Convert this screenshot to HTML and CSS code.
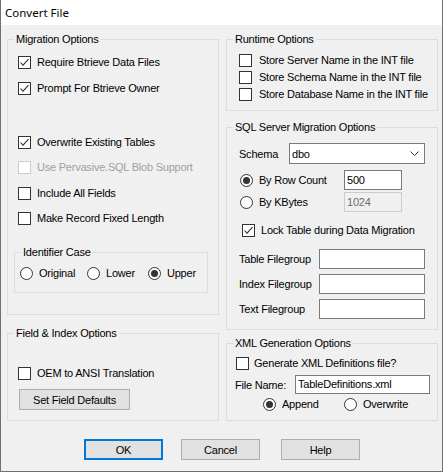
FILE: index.html
```html
<!DOCTYPE html>
<html>
<head>
<meta charset="utf-8">
<title>Convert File</title>
<link rel="stylesheet" href="styles.css">
</head>
<body>
<div class="window">
  <div class="titlebar">Convert File</div>
  <div class="client">
    <div class="columns">
      <div class="col">
        <fieldset class="gb gb-migration">
          <legend>Migration Options</legend>
          <div class="body body-mig">
            <div class="cb-row r1"><span class="cb checked"><svg viewBox="0 0 13 13"><polyline points="2.5,6.5 5,9.2 10.5,3.2"/></svg></span><span>Require Btrieve Data Files</span></div>
            <div class="cb-row r2"><span class="cb checked"><svg viewBox="0 0 13 13"><polyline points="2.5,6.5 5,9.2 10.5,3.2"/></svg></span><span>Prompt For Btrieve Owner</span></div>
            <div class="cb-row r3"><span class="cb checked"><svg viewBox="0 0 13 13"><polyline points="2.5,6.5 5,9.2 10.5,3.2"/></svg></span><span>Overwrite Existing Tables</span></div>
            <div class="cb-row r4 disabled"><span class="cb"></span><span>Use Pervasive.SQL Blob Support</span></div>
            <div class="cb-row r5"><span class="cb"></span><span>Include All Fields</span></div>
            <div class="cb-row r6"><span class="cb"></span><span>Make Record Fixed Length</span></div>
            <fieldset class="gb gb-ident">
              <legend>Identifier Case</legend>
              <div class="radio-grid">
                <div class="rb-row"><span class="rb"></span><span>Original</span></div>
                <div class="rb-row"><span class="rb"></span><span>Lower</span></div>
                <div class="rb-row"><span class="rb on"></span><span>Upper</span></div>
              </div>
            </fieldset>
          </div>
        </fieldset>
        <fieldset class="gb gb-field">
          <legend>Field &amp; Index Options</legend>
          <div class="body body-field">
            <div class="cb-row oem"><span class="cb"></span><span>OEM to ANSI Translation</span></div>
            <button class="btn btn-defaults">Set Field Defaults</button>
          </div>
        </fieldset>
      </div>
      <div class="col">
        <fieldset class="gb gb-runtime">
          <legend>Runtime Options</legend>
          <div class="body body-run">
            <div class="cb-row"><span class="cb"></span><span>Store Server Name in the INT file</span></div>
            <div class="cb-row"><span class="cb"></span><span>Store Schema Name in the INT file</span></div>
            <div class="cb-row"><span class="cb"></span><span>Store Database Name in the INT file</span></div>
          </div>
        </fieldset>
        <fieldset class="gb gb-sql">
          <legend>SQL Server Migration Options</legend>
          <div class="body body-sql">
            <div class="schema-row">
              <span class="lbl lbl-schema">Schema</span>
              <div class="combo"><span class="combo-text">dbo</span><svg class="chev" viewBox="0 0 9 5"><polyline points="0.5,0.5 4.5,4.5 8.5,0.5"/></svg></div>
            </div>
            <div class="opt-row opt1">
              <div class="rb-row"><span class="rb on"></span><span>By Row Count</span></div>
              <div class="tb tb-num">500</div>
            </div>
            <div class="opt-row opt2">
              <div class="rb-row"><span class="rb"></span><span>By KBytes</span></div>
              <div class="tb tb-num tb-disabled">1024</div>
            </div>
            <div class="cb-row lock"><span class="cb checked"><svg viewBox="0 0 13 13"><polyline points="2.5,6.5 5,9.2 10.5,3.2"/></svg></span><span>Lock Table during Data Migration</span></div>
            <div class="fg-row fg1"><span class="lbl">Table Filegroup</span><div class="tb tb-fg"></div></div>
            <div class="fg-row"><span class="lbl">Index Filegroup</span><div class="tb tb-fg"></div></div>
            <div class="fg-row"><span class="lbl">Text Filegroup</span><div class="tb tb-fg"></div></div>
          </div>
        </fieldset>
        <fieldset class="gb gb-xml">
          <legend>XML Generation Options</legend>
          <div class="body body-xml">
            <div class="cb-row gen"><span class="cb"></span><span>Generate XML Definitions file?</span></div>
            <div class="file-row"><span class="lbl">File Name:</span><div class="tb tb-file">TableDefinitions.xml</div></div>
            <div class="xml-radios">
              <div class="rb-row"><span class="rb on"></span><span>Append</span></div>
              <div class="rb-row"><span class="rb"></span><span>Overwrite</span></div>
            </div>
          </div>
        </fieldset>
      </div>
    </div>
    <div class="buttons">
      <button class="btn btn-main btn-ok">OK</button>
      <button class="btn btn-main btn-cancel">Cancel</button>
      <button class="btn btn-main btn-help">Help</button>
    </div>
  </div>
</div>
</body>
</html>
```
FILE: styles.css
```css
* { box-sizing: border-box; }
html, body { margin: 0; padding: 0; background: #f0f0f0; }
body {
  font-family: "Liberation Sans", Arial, sans-serif;
  font-size: 11px;
  letter-spacing: -0.22px;
  color: #000;
}
.window {
  width: 443px;
  height: 472px;
  border: 1px solid #707070;
  border-top: none;
  background: #f0f0f0;
  display: flex;
  flex-direction: column;
}
.titlebar {
  height: 25px;
  background: #fff;
  font-family: "Noto Sans", "Liberation Sans", sans-serif;
  font-size: 11.5px;
  letter-spacing: 0;
  line-height: 25px;
  padding-left: 4px;
  color: #000;
}
.client { padding: 8px 0 0 6px; }
.columns { display: flex; gap: 7px; }
.col { width: 212px; display: flex; flex-direction: column; }

.gb {
  margin: 0;
  padding: 0;
  border: 1px solid #dcdcdc;
  min-width: 0;
}
.gb legend {
  padding: 0 2px;
  margin-left: 6px;
  line-height: 13px;
  height: 13px;
}
.gb-migration { height: 282px; }
.gb-field { height: 94px; margin-top: 12px; }
.gb-runtime { height: 78px; }
.gb-sql { height: 209px; margin-top: 10px; }
.gb-xml { height: 84px; margin-top: 7px; }

.cb-row, .rb-row { display: flex; align-items: center; height: 13px; line-height: 13px; white-space: nowrap; }
.cb {
  width: 13px; height: 13px; flex: none;
  border: 1px solid #333;
  background: #fff;
  margin-right: 6px;
  display: block;
}
.cb svg { display: block; width: 13px; height: 13px; margin: -1px 0 0 -1px; }
.cb svg polyline { fill: none; stroke: #333; stroke-width: 1.1; }
.disabled { color: #a0a0a0; }
.disabled .cb { border-color: #cccccc; }

.rb {
  width: 13px; height: 13px; flex: none;
  border: 1px solid #333;
  border-radius: 50%;
  background: #fff;
  margin-right: 6px;
  position: relative;
}
.rb.on::after {
  content: "";
  position: absolute;
  left: 2px; top: 2px;
  width: 7px; height: 7px;
  border-radius: 50%;
  background: #333;
}

/* Migration options */
.body-mig { padding: 0 10px 0 6px; }
.body-mig > .cb-row { margin-left: 4px; }
.r1 { margin-top: 10px; }
.r2 { margin-top: 13px; }
.r3 { margin-top: 41px; }
.r4 { margin-top: 12px; }
.r5 { margin-top: 13px; }
.r6 { margin-top: 12px; }
.gb-ident { margin-top: 21px; height: 47px; }
.radio-grid {
  display: grid;
  grid-template-columns: 67px 61px auto;
  padding-left: 5px;
  margin-top: 8px;
}

/* Field & index */
.body-field { padding-left: 10px; }
.oem { margin-top: 27px; }
.btn {
  font-family: "Liberation Sans", Arial, sans-serif;
  font-size: 11px;
  letter-spacing: -0.22px;
  color: #000;
  background: #e1e1e1;
  border: 1px solid #adadad;
  padding: 0;
  margin: 0;
  display: block;
}
.btn-defaults { width: 111px; height: 21px; margin-top: 9px; margin-left: 1px; }

/* Runtime */
.body-run { padding-left: 12px; padding-top: 8px; display: flex; flex-direction: column; gap: 4px; }
.body-run .cb-row .cb { margin-right: 7px; }

/* SQL */
.body-sql { padding-left: 12px; }
.schema-row { display: flex; align-items: center; margin-top: 9px; height: 21px; }
.lbl { white-space: nowrap; }
.lbl-schema { width: 50px; }
.combo {
  width: 136px; height: 21px;
  border: 1px solid #7a7a7a;
  background: #fff;
  display: flex; align-items: center; justify-content: space-between;
  padding: 0 5px 0 2px;
}
.chev { width: 9px; height: 5px; display: block; }
.chev polyline { fill: none; stroke: #333; stroke-width: 1; }
.opt-row { display: flex; align-items: center; height: 20px; }
.opt-row .rb-row { width: 104px; margin-left: 1px; }
.opt1 { margin-top: 6px; }
.opt2 { margin-top: 2px; }
.tb {
  border: 1px solid #7a7a7a;
  background: #fff;
  height: 20px;
  line-height: 18px;
  padding-left: 2px;
  white-space: nowrap;
}
.tb-num { width: 58px; }
.tb-disabled { border-color: #cccccc; background: #f0f0f0; color: #6d6d6d; }
.lock { margin-top: 12px; margin-left: 3px; }
.lock .cb { margin-right: 6px; }
.fg-row { display: flex; align-items: center; margin-top: 5px; }
.fg1 { margin-top: 12px; }
.fg-row .lbl { width: 80px; }
.tb-fg { width: 106px; }

/* XML */
.body-xml { padding-left: 9px; }
.gen { margin-top: 7px; }
.gen .cb { margin-right: 5px; }
.file-row { display: flex; align-items: center; margin-top: 5px; margin-left: -1px; }
.file-row .lbl { width: 60px; }
.tb-file { width: 135px; height: 19px; line-height: 17px; }
.xml-radios { display: grid; grid-template-columns: 81px auto; margin-top: 4px; padding-left: 27px; }

/* Buttons */
.buttons { display: flex; margin-top: 18px; padding-left: 77px; }
.btn-main { width: 79px; height: 21px; }
.btn-ok { border: 2px solid #0078d7; }
.btn-cancel { margin-left: 18px; }
.btn-help { margin-left: 21px; }
```
